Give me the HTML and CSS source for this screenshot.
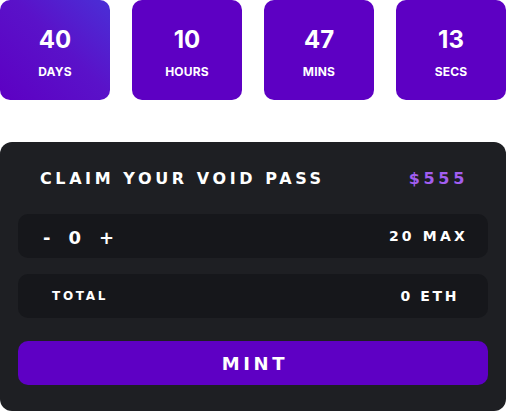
FILE: index.html
```html
<!DOCTYPE html>
<html>
<head>
<meta charset="utf-8">
<link rel="stylesheet" href="styles.css">
</head>
<body>
<div class="countdown">
  <div class="box box-grad"><div class="num">40</div><div class="unit">DAYS</div></div>
  <div class="box"><div class="num">10</div><div class="unit">HOURS</div></div>
  <div class="box"><div class="num">47</div><div class="unit">MINS</div></div>
  <div class="box"><div class="num">13</div><div class="unit">SECS</div></div>
</div>
<div class="card">
  <div class="head">
    <span class="title">CLAIM YOUR VOID PASS</span>
    <span class="price">$555</span>
  </div>
  <div class="row row-qty">
    <div class="qty"><span>-</span><span>0</span><span>+</span></div>
    <span class="max">20 MAX</span>
  </div>
  <div class="row row-total">
    <span class="total">TOTAL</span>
    <span class="eth">0 ETH</span>
  </div>
  <button class="mint">MINT</button>
</div>
</body>
</html>
```
FILE: styles.css
```css
* { box-sizing: border-box; }
html, body { margin: 0; padding: 0; background: #ffffff; }
body { width: 506px; height: 411px; overflow: hidden; }

.countdown {
  display: flex;
  gap: 22px;
  height: 100px;
}
.box {
  width: 110px;
  height: 100px;
  border-radius: 10px;
  background: #5d00c3;
  color: #ffffff;
  font-family: Inter, "Noto Sans", sans-serif;
  font-weight: 700;
  display: flex;
  flex-direction: column;
  align-items: center;
  padding-top: 26px;
}
.box-grad {
  background: linear-gradient(225deg, #4a2fd6 0%, #5a12c9 45%, #5d00c3 100%);
}
.num {
  font-size: 24px;
  line-height: 28px;
}
.unit {
  margin-top: 11px;
  font-size: 12px;
  line-height: 14px;
  letter-spacing: 0.2px;
}

.card {
  margin-top: 42px;
  height: 269px;
  background: #1e1f23;
  border-radius: 12px;
  padding: 0 18px;
  font-family: "DejaVu Sans", Verdana, sans-serif;
  font-weight: 700;
  color: #ffffff;
}
.head {
  height: 72px;
  display: flex;
  align-items: center;
  justify-content: space-between;
  padding: 0 20px 0 22px;
}
.title {
  font-size: 16px;
  letter-spacing: 3.6px;
}
.price {
  font-size: 16px;
  letter-spacing: 3.7px;
  color: #a25ef0;
}
.row {
  height: 44px;
  background: #16171b;
  border-radius: 10px;
  display: flex;
  align-items: center;
  justify-content: space-between;
}
.row-qty { padding: 0 20px 0 25px; }
.row-total { margin-top: 16px; padding: 0 29px 0 34px; }
.qty {
  display: flex;
  gap: 18px;
  font-size: 18px;
  padding-top: 2px;
}
.max {
  font-size: 14px;
  letter-spacing: 3.2px;
}
.total {
  font-size: 12px;
  letter-spacing: 2.7px;
}
.eth {
  font-size: 14px;
  letter-spacing: 2.6px;
}
.mint {
  display: block;
  width: 100%;
  margin-top: 23px;
  height: 44px;
  border: none;
  border-radius: 10px;
  background: #5e00c4;
  color: #ffffff;
  font-family: "DejaVu Sans", Verdana, sans-serif;
  font-weight: 700;
  font-size: 18px;
  letter-spacing: 3.6px;
  padding: 0 0 0 4px;
}
```
